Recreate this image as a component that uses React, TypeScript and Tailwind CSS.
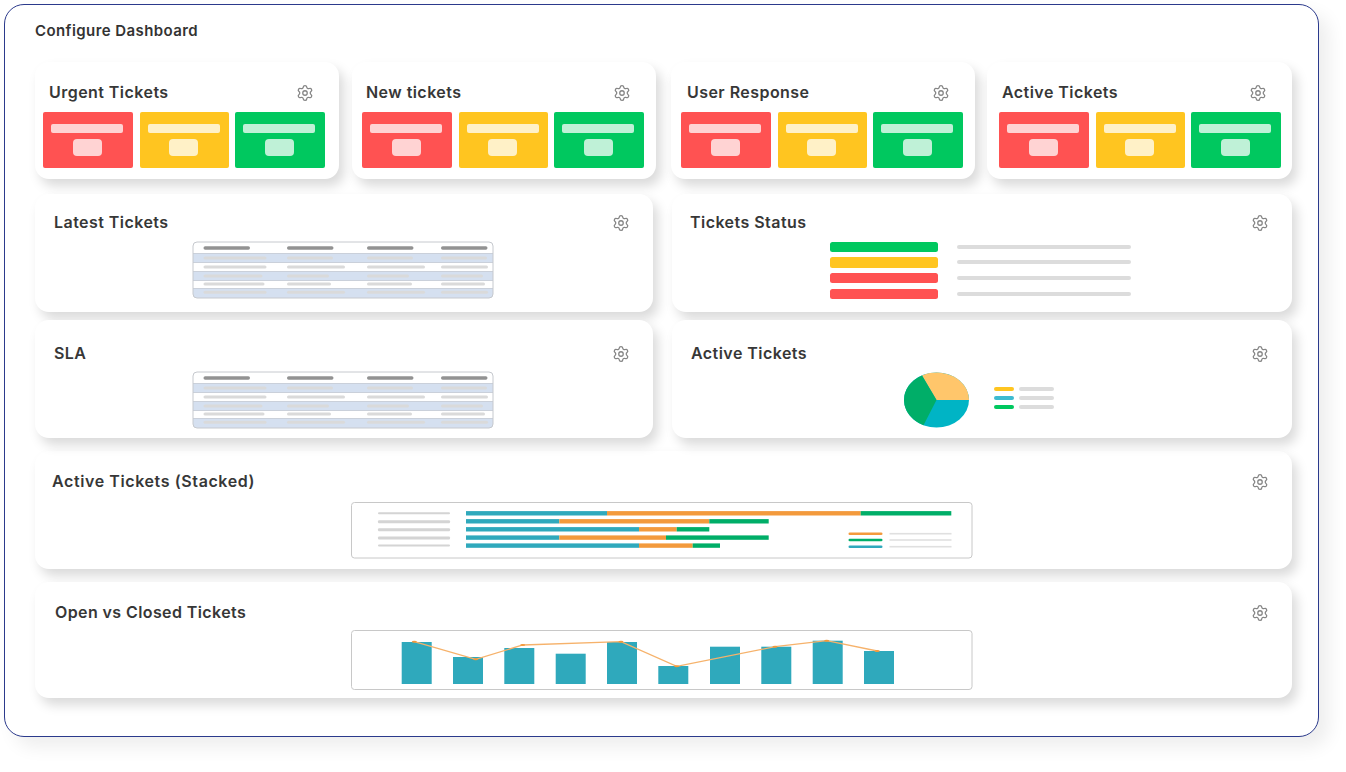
import { Settings } from "lucide-react";
import type { ReactNode } from "react";

const tiles = [
  "bg-[#ff5252]",
  "ml-[7px] bg-[#ffc520]",
  "ml-[6px] bg-[#00c85f]",
];

function Card({
  title,
  className,
  headClass,
  gearClass = "mr-[23px]",
  titleClass = "tracking-[0.45px]",
  children,
}: {
  title: string;
  className: string;
  headClass: string;
  gearClass?: string;
  titleClass?: string;
  children?: ReactNode;
}) {
  return (
    <section className={`rounded-[14px] bg-white shadow-[5px_7px_12px_rgba(0,0,0,0.15)] ${className}`}>
      <div className={`flex h-[24px] items-center justify-between ${headClass}`}>
        <h2 className={`text-[16px] font-semibold text-[#373737] ${titleClass}`}>{title}</h2>
        <Settings className={`mt-[2px] h-[18px] w-[18px] text-[#858585] ${gearClass}`} strokeWidth={1.7} />
      </div>
      {children}
    </section>
  );
}

function TicketCard({
  title,
  className,
  headClass,
  tileClass,
}: {
  title: string;
  className: string;
  headClass: string;
  tileClass: string;
}) {
  return (
    <Card title={title} className={`h-[117px] pt-[18px] ${className}`} headClass={headClass} gearClass="mr-[25.5px]">
      <div className={`mt-[8px] flex ${tileClass}`}>
        {tiles.map((t) => (
          <div key={t} className={`flex h-[56px] w-[89.5px] flex-col items-center rounded-[2px] pr-[1.5px] pt-[11.5px] ${t}`}>
            <div className="h-[9.5px] w-[72px] rounded-[2px] bg-white/75" />
            <div className="mt-[6px] h-[16.5px] w-[29px] rounded-[4px] bg-white/75" />
          </div>
        ))}
      </div>
    </Card>
  );
}

function MiniTable() {
  const cols = [11.5, 95, 175, 249];
  const rows = [
    { y: 12.5, h: 9, fill: "#d5e0f0", w: [63, 46, 46, 46], line: 15.5 },
    { y: 22, h: 8, fill: "#ffffff", w: [63, 58, 58, 47], line: 24.5 },
    { y: 30.5, h: 9, fill: "#d5e0f0", w: [59, 42, 42, 42], line: 33.5 },
    { y: 40, h: 7, fill: "#ffffff", w: [61, 44, 45, 44], line: 41.5 },
    { y: 47.5, h: 10, fill: "#d5e0f0", w: [63, 58, 58, 47], line: 49.8 },
  ];
  return (
    <svg width="302" height="58" viewBox="0 0 302 58" className="mr-[2px] block">
      <defs>
        <clipPath id="tbl">
          <rect x="1" y="1" width="300" height="56" rx="4" />
        </clipPath>
      </defs>
      <g clipPath="url(#tbl)">
        <rect x="1" y="1" width="300" height="56" fill="#fff" />
        {rows.map((r) => (
          <g key={r.y}>
            <rect x="0" y={r.y} width="302" height={r.h} fill={r.fill} stroke="#bcc3cd" strokeWidth={r.fill === "#ffffff" ? 0 : 0.7} />
            {r.w.map((w, i) => (
              <rect key={i} x={cols[i]} y={r.line} width={w} height="3" rx="1.5" fill="#dadada" />
            ))}
          </g>
        ))}
        {cols.map((x) => (
          <rect key={x} x={x} y="5.2" width="46.5" height="3.5" rx="1.7" fill="#929292" />
        ))}
      </g>
      <rect x="1" y="1" width="300" height="56" rx="4" fill="none" stroke="#c6c9ce" />
    </svg>
  );
}

function StatusThumb() {
  const rows = ["bg-[#00c85f]", "bg-[#ffc520]", "bg-[#ff5252]", "bg-[#ff5252]"];
  return (
    <div className="ml-[158px] flex flex-col gap-[5.2px]">
      {rows.map((c, i) => (
        <div key={i} className="flex items-center gap-[19px]">
          <div className={`h-[10.5px] w-[108px] rounded-[2.5px] ${c}`} />
          <div className="h-[4px] w-[174px] rounded-[2px] bg-[#dcdcdc]" />
        </div>
      ))}
    </div>
  );
}

function PieThumb() {
  const legend = ["bg-[#ffc520]", "bg-[#3ebbd0]", "bg-[#00c85f]"];
  return (
    <div className="ml-[232px] mt-[-5px] flex items-center gap-[24px]">
      <svg width="66" height="56" viewBox="0 0 66 56" className="block">
        <ellipse cx="32.5" cy="28" rx="32.5" ry="27.5" fill="#00b4c5" />
        <path d="M32.5 28 L65 28 A32.5 27.5 0 0 0 18 3.4 Z" fill="#ffc66b" />
        <path d="M32.5 28 L18 3.4 A32.5 27.5 0 0 0 19.5 53.2 Z" fill="#00ae68" />
      </svg>
      <div className="mb-[4px] flex flex-col gap-[5px]">
        {legend.map((c) => (
          <div key={c} className="flex items-center gap-[5px]">
            <div className={`h-[4px] w-[20px] rounded-[2px] ${c}`} />
            <div className="h-[4px] w-[35px] rounded-[2px] bg-[#dcdcdc]" />
          </div>
        ))}
      </div>
    </div>
  );
}

function StackedThumb() {
  const rows = [
    { y: 11.3, a: 607, b: 860.7, c: 951.3 },
    { y: 19.3, a: 559.3, b: 709.3, c: 768.7 },
    { y: 27.3, a: 639, b: 676.7, c: 709.3 },
    { y: 35.6, a: 559.3, b: 666, c: 768.7 },
    { y: 43.6, a: 639, b: 692.7, c: 720 },
  ];
  const ox = 351;
  const legend = [
    { y: 31.7, c: "#f39a3c" },
    { y: 38, c: "#00ae68" },
    { y: 44.7, c: "#2fa9bc" },
  ];
  return (
    <svg width="622" height="57" viewBox="0 0 622 57" className="block">
      <rect x="0.5" y="0.5" width="620.5" height="55.5" rx="3" fill="#fff" stroke="#c8c8c8" />
      {rows.map((r, i) => (
        <g key={r.y}>
          <rect x="27" y={r.y - 1} width="72" height={i === 0 || i === 4 ? 2 : 3} rx="1" fill="#d4d4d4" />
          <rect x={466 - ox} y={r.y - 2.2} width={r.a - 466} height="4.4" fill="#2fa9bc" />
          <rect x={r.a - ox} y={r.y - 2.2} width={r.b - r.a} height="4.4" fill="#f39a3c" />
          <rect x={r.b - ox} y={r.y - 2.2} width={r.c - r.b} height="4.4" fill="#00ae68" />
        </g>
      ))}
      {legend.map((l) => (
        <g key={l.y}>
          <rect x="497.5" y={l.y - 1.3} width="34" height="2.6" rx="1.3" fill={l.c} />
          <rect x="538.5" y={l.y - 0.8} width="62" height="1.6" fill="#e0e0e0" />
        </g>
      ))}
    </svg>
  );
}

function BarsThumb() {
  const ox = 351;
  const oy = 630;
  const bars = [
    [401.7, 642],
    [453, 657],
    [504.3, 648],
    [555.7, 653.7],
    [607, 642],
    [658.3, 666],
    [710, 646.7],
    [761.3, 646.7],
    [812.7, 640.7],
    [864, 651],
  ];
  const pts = [
    [414.3, 641.7],
    [475.7, 659.3],
    [522.7, 645],
    [621, 641.7],
    [676.7, 666.3],
    [775, 646.7],
    [826.7, 640.7],
    [877.3, 651],
  ];
  return (
    <svg width="622" height="61" viewBox="0 0 622 61" className="block">
      <rect x="0.5" y="0.5" width="620.5" height="59" rx="3" fill="#fff" stroke="#c8c8c8" />
      {bars.map(([x, y]) => (
        <rect key={x} x={x - ox} y={y - oy} width="30" height={684 - y} fill="#2fa9bc" />
      ))}
      <polyline
        points={pts.map(([x, y]) => `${x - ox},${y - oy}`).join(" ")}
        fill="none"
        stroke="#f6b26b"
        strokeWidth="1.3"
      />
      {pts.map(([x, y]) => (
        <ellipse key={x} cx={x - ox} cy={y - oy} rx="2.5" ry="1" fill="#f39a3c" />
      ))}
    </svg>
  );
}

export default function App() {
  return (
    <div className="h-[772px] w-[1346px] bg-white p-[4px] font-['Inter',sans-serif]">
      <main className="h-[733px] w-[1315px] rounded-[20px] border border-[#2b3a8c] bg-white pl-[30px] shadow-[10px_10px_18px_rgba(0,0,0,0.07)]">
        <h1 className="pt-[16px] text-[15px] font-semibold leading-[20px] tracking-[0.42px] text-[#333333]">Configure Dashboard</h1>

        <div className="mt-[21px] flex">
          <TicketCard title="Urgent Tickets" className="w-[304px]" headClass="pl-[14px]" tileClass="ml-[8px]" />
          <TicketCard title="New tickets" className="ml-[13px] w-[304px]" headClass="pl-[14px]" tileClass="ml-[10px]" />
          <TicketCard title="User Response" className="ml-[15px] w-[304px]" headClass="pl-[16px]" tileClass="ml-[10px]" />
          <TicketCard title="Active Tickets" className="ml-[12px] w-[305px]" headClass="pl-[15px]" tileClass="ml-[12px]" />
        </div>

        <div className="mt-[15px] flex gap-[19px]">
          <Card title="Latest Tickets" className="h-[118px] w-[618px] pt-[16px]" headClass="pl-[19px]">
            <div className="mt-[7px] flex justify-center">
              <MiniTable />
            </div>
          </Card>
          <Card title="Tickets Status" className="h-[118px] w-[620px] pt-[16px]" headClass="pl-[18px]">
            <div className="mt-[7.5px]">
              <StatusThumb />
            </div>
          </Card>
        </div>

        <div className="mt-[8px] flex gap-[19px]">
          <Card title="SLA" className="h-[118px] w-[618px] pt-[21px]" headClass="pl-[19px]">
            <div className="mt-[6px] flex justify-center">
              <MiniTable />
            </div>
          </Card>
          <Card title="Active Tickets" className="h-[118px] w-[620px] pt-[21px]" headClass="pl-[19px]">
            <div className="mt-[12px]">
              <PieThumb />
            </div>
          </Card>
        </div>

        <Card
          title="Active Tickets (Stacked)"
          className="mt-[13px] h-[118px] w-[1257px] pt-[18px]"
          headClass="pl-[17px]"
          titleClass="tracking-[0.6px]"
        >
          <div className="ml-[316px] mt-[9px]">
            <StackedThumb />
          </div>
        </Card>

        <Card
          title="Open vs Closed Tickets"
          className="mt-[13px] h-[116px] w-[1257px] pt-[18px]"
          headClass="pl-[20px]"
          titleClass="tracking-[0.4px]"
        >
          <div className="ml-[316px] mt-[6px]">
            <BarsThumb />
          </div>
        </Card>
      </main>
    </div>
  );
}
